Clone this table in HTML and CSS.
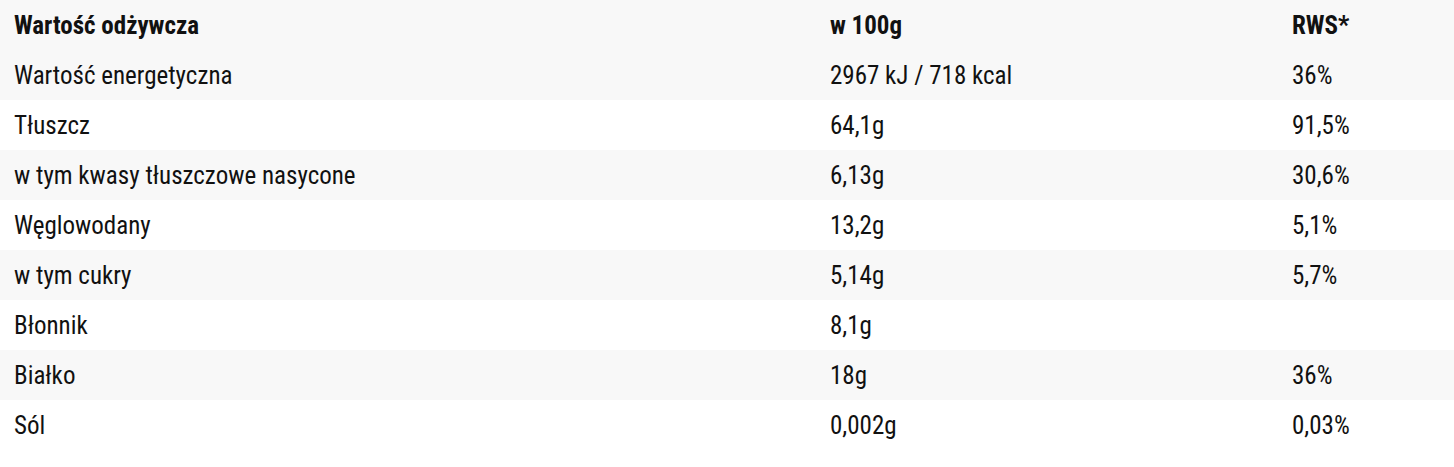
FILE: index.html
```html
<!DOCTYPE html>
<html lang="pl">
<head>
<meta charset="utf-8">
<link rel="stylesheet" href="styles.css">
</head>
<body>
<table class="nutrition">
  <thead>
    <tr><th class="c1">Wartość odżywcza</th><th class="c2">w 100g</th><th class="c3">RWS*</th></tr>
  </thead>
  <tbody>
    <tr><td>Wartość energetyczna</td><td>2967 kJ / 718 kcal</td><td>36%</td></tr>
    <tr><td>Tłuszcz</td><td>64,1g</td><td>91,5%</td></tr>
    <tr><td>w tym kwasy tłuszczowe nasycone</td><td>6,13g</td><td>30,6%</td></tr>
    <tr><td>Węglowodany</td><td>13,2g</td><td>5,1%</td></tr>
    <tr><td>w tym cukry</td><td>5,14g</td><td>5,7%</td></tr>
    <tr><td>Błonnik</td><td>8,1g</td><td></td></tr>
    <tr><td>Białko</td><td>18g</td><td>36%</td></tr>
    <tr><td>Sól</td><td>0,002g</td><td>0,03%</td></tr>
  </tbody>
</table>
</body>
</html>
```
FILE: styles.css
```css
html, body {
  margin: 0;
  padding: 0;
  background: #ffffff;
}
body {
  font-family: "Roboto Condensed", "Liberation Sans Narrow", Roboto, sans-serif;
  color: #111111;
}
.nutrition {
  width: 100%;
  border-collapse: collapse;
  table-layout: fixed;
  font-size: 25px;
}
.nutrition th,
.nutrition td {
  height: 50px;
  padding: 2px 14px 0;
  text-align: left;
  vertical-align: middle;
  box-sizing: border-box;
  white-space: nowrap;
  line-height: 30px;
}
.nutrition th {
  font-weight: 700;
}
.c1 { width: 816px; }
.c2 { width: 462px; }
.nutrition thead tr {
  background: #f8f8f8;
}
.nutrition tbody tr:nth-child(odd) {
  background: #f8f8f8;
}
```
